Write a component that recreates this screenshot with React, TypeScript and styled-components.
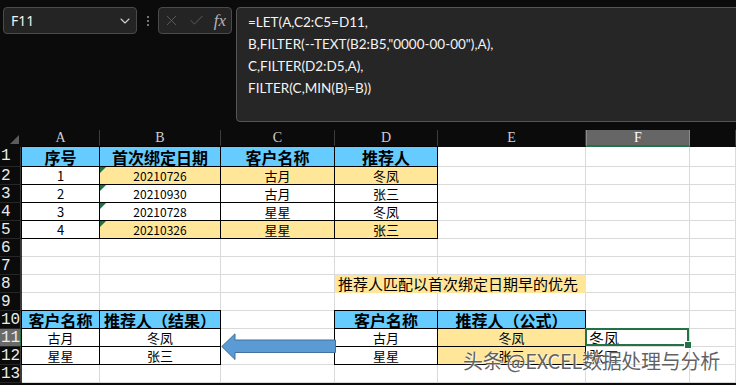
import React from 'react';
import styled, { createGlobalStyle, css } from 'styled-components';
import { ChevronDown, X, Check } from 'lucide-react';

type Fill = 'blue' | 'yellow';

interface CellSpec {
    text?: string;
    fill?: Fill;
    bold?: boolean;
    boxed?: boolean;
    flag?: boolean;
    left?: boolean;
    size?: number;
    span?: number;
    selected?: boolean;
}

const COLS = ['A', 'B', 'C', 'D', 'E', 'F', ''];
const ACTIVE_COL = 'F';
const ACTIVE_ROW = 11;

const head = (text: string): CellSpec => ({ text, fill: 'blue', bold: true, boxed: true, size: 16 });
const box = (text: string, fill?: Fill, flag?: boolean): CellSpec => ({ text, fill, boxed: true, flag, size: flag ? 12 : 13 });

const empty = (n: number): CellSpec[] => Array.from({ length: n }, () => ({}));

const ROWS: CellSpec[][] = [
    [head('序号'), head('首次绑定日期'), head('客户名称'), head('推荐人'), ...empty(3)],
    [box('1'), box('20210726', 'yellow', true), box('古月', 'yellow'), box('冬凤', 'yellow'), ...empty(3)],
    [box('2'), box('20210930', undefined, true), box('古月'), box('张三'), ...empty(3)],
    [box('3'), box('20210728', undefined, true), box('星星'), box('冬凤'), ...empty(3)],
    [box('4'), box('20210326', 'yellow', true), box('星星', 'yellow'), box('张三', 'yellow'), ...empty(3)],
    empty(7),
    empty(7),
    [...empty(3), { text: '推荐人匹配以首次绑定日期早的优先', fill: 'yellow', left: true, size: 15, span: 2 }, ...empty(2)],
    empty(7),
    [head('客户名称'), head('推荐人（结果）'), {}, head('客户名称'), head('推荐人（公式）'), ...empty(2)],
    [box('古月'), box('冬凤'), {}, box('古月'), box('冬凤', 'yellow'), { text: '冬凤', left: true, size: 15, selected: true }, {}],
    [box('星星'), box('张三'), {}, box('星星'), box('张三', 'yellow'), { text: '张三', left: true, size: 15 }, {}],
    empty(7),
];

const FORMULA = [
    '=LET(A,C2:C5=D11,',
    'B,FILTER(--TEXT(B2:B5,"0000-00-00"),A),',
    'C,FILTER(D2:D5,A),',
    'FILTER(C,MIN(B)=B))',
];

export default function App() {
    return (
        <Page>
            <GlobalStyle />
            <Toolbar>
                <NameBox>
                    <span>F11</span>
                    <ChevronDown size={16} strokeWidth={1.6} />
                </NameBox>
                <Kebab>
                    <i /><i /><i />
                </Kebab>
                <FxBox>
                    <X size={17} strokeWidth={1.3} />
                    <Check size={17} strokeWidth={1.3} />
                    <FxMark>fx</FxMark>
                </FxBox>
                <FormulaBox>
                    {FORMULA.map((line) => (
                        <FormulaLine key={line}>{line}</FormulaLine>
                    ))}
                </FormulaBox>
            </Toolbar>

            <Sheet>
                <Corner>
                    <CornerMark />
                </Corner>
                {COLS.map((c, i) => (
                    <ColHead key={i} $active={c === ACTIVE_COL}>{c}</ColHead>
                ))}

                {ROWS.map((row, r) => (
                    <React.Fragment key={r}>
                        <RowHead $active={r + 1 === ACTIVE_ROW}>{r + 1}</RowHead>
                        {row.map((cell, c) => (
                            <Cell
                                key={c}
                                $fill={cell.fill}
                                $bold={cell.bold}
                                $boxed={cell.boxed}
                                $flag={cell.flag}
                                $left={cell.left}
                                $size={cell.size}
                                $span={cell.span}
                                $selected={cell.selected}
                            >
                                {cell.text}
                            </Cell>
                        ))}
                    </React.Fragment>
                ))}

                <Arrow width="116" height="28" viewBox="0 0 116 28">
                    <path
                        d="M0.8 13.5 L14 0.8 L14 7 L114.5 7 L114.5 19.5 L14 19.5 L14 26.5 Z"
                        fill="#5b9bd5"
                        stroke="#41719c"
                        strokeWidth="1"
                    />
                </Arrow>
            </Sheet>

            <Watermark>头条 @EXCEL数据处理与分析</Watermark>
        </Page>
    );
}

const GlobalStyle = createGlobalStyle`
    html, body {
        margin: 0;
        padding: 0;
        background: #0b0b0b;
        overflow: hidden;
    }
    * {
        box-sizing: border-box;
    }
`;

const Page = styled.div`
    position: relative;
    width: 736px;
    height: 385px;
    overflow: hidden;
    background: #0b0b0b;
    font-family: "Noto Sans CJK SC", sans-serif;
`;

const Toolbar = styled.div`
    height: 130px;
    display: flex;
    align-items: flex-start;
    padding: 7px 0 0 3px;
`;

const NameBox = styled.div`
    width: 134px;
    height: 27px;
    display: flex;
    align-items: center;
    justify-content: space-between;
    padding: 0 3px 0 7px;
    background: #242424;
    border: 1px solid #4a4a4a;
    border-radius: 4px;
    color: #f2f2f2;
    font-family: "Noto Sans", sans-serif;
    font-size: 14px;

    svg {
        color: #d0d0d0;
    }
`;

const Kebab = styled.div`
    width: 21px;
    height: 27px;
    display: flex;
    flex-direction: column;
    align-items: center;
    justify-content: center;
    gap: 2px;

    i {
        width: 2px;
        height: 2px;
        border-radius: 50%;
        background: #9a9a9a;
    }
`;

const FxBox = styled.div`
    width: 74px;
    height: 27px;
    display: flex;
    align-items: center;
    justify-content: space-between;
    padding: 0 5px 0 4px;
    background: #242424;
    border: 1px solid #4a4a4a;
    border-radius: 4px;
    color: #5e5e5e;
`;

const FxMark = styled.span`
    color: #b4b4b4;
    font-family: "Liberation Serif", serif;
    font-style: italic;
    font-size: 17px;
    line-height: 1;
`;

const FormulaBox = styled.div`
    flex: 1;
    height: 115px;
    margin-left: 4px;
    margin-right: -10px;
    padding: 3px 10px 0 11px;
    background: #262626;
    border: 1px solid #555;
    border-radius: 4px;
    color: #f4f4f4;
    font-family: "Lato", sans-serif;
    font-size: 13.5px;
`;

const FormulaLine = styled.div`
    line-height: 22px;
    white-space: pre;
`;

const Sheet = styled.div`
    position: relative;
    display: grid;
    grid-template-columns: 22px 78px 121px 114px 103px 148px 104px 1fr;
    grid-template-rows: 17px 20px repeat(12, 18px);
    background: #fff;
`;

const Corner = styled.div`
    background: #0b0b0b;
    display: flex;
    align-items: flex-end;
    justify-content: flex-end;
    padding: 0 3px 3px 0;
`;

const CornerMark = styled.div`
    width: 0;
    height: 0;
    border-left: 9px solid transparent;
    border-bottom: 9px solid #5c5c5c;
`;

const ColHead = styled.div<{ $active?: boolean }>`
    background: ${p => (p.$active ? '#666' : '#0b0b0b')};
    color: ${p => (p.$active ? '#fff' : '#cfcfcf')};
    border-right: 1px solid ${p => (p.$active ? '#8a8a8a' : '#3c3c3c')};
    border-left: ${p => (p.$active ? '1px solid #8a8a8a' : 'none')};
    border-bottom: 2px solid ${p => (p.$active ? '#217346' : '#0b0b0b')};
    font-family: "Liberation Serif", serif;
    font-size: 14px;
    line-height: 16px;
    text-align: center;
`;

const RowHead = styled.div<{ $active?: boolean }>`
    background: ${p => (p.$active ? '#6a6a6a' : '#0b0b0b')};
    color: #ececec;
    border-bottom: 1px solid #262626;
    border-right: 2px solid ${p => (p.$active ? '#217346' : '#3a3a3a')};
    font-family: "Liberation Mono", monospace;
    font-size: 16px;
    line-height: 18px;
    padding-left: 1px;
    overflow: hidden;
`;

const fills: Record<Fill, string> = {
    blue: '#66ccff',
    yellow: '#ffe699',
};

interface CellProps {
    $fill?: Fill;
    $bold?: boolean;
    $boxed?: boolean;
    $flag?: boolean;
    $left?: boolean;
    $size?: number;
    $span?: number;
    $selected?: boolean;
}

const Cell = styled.div<CellProps>`
    position: relative;
    grid-column: span ${p => p.$span ?? 1};
    display: flex;
    align-items: center;
    justify-content: ${p => (p.$left ? 'flex-start' : 'center')};
    padding-left: ${p => (p.$left ? '3px' : '0')};
    background: ${p => (p.$fill ? fills[p.$fill] : '#fff')};
    border-right: 1px solid ${p => (p.$span ? 'transparent' : '#dadada')};
    border-bottom: 1px solid ${p => (p.$span ? fills.yellow : '#dadada')};
    color: #000;
    font-size: ${p => p.$size ?? 13}px;
    font-weight: ${p => (p.$bold ? 700 : 400)};
    white-space: nowrap;
    line-height: 1;

    ${p => p.$boxed && css`
        z-index: 1;
        margin: -1px 0 0 -1px;
        border: 1px solid #000;
    `}

    ${p => p.$flag && css`
        &::before {
            content: '';
            position: absolute;
            top: 0;
            left: 0;
            border-top: 6px solid #1e7145;
            border-right: 6px solid transparent;
        }
    `}

    ${p => p.$selected && css`
        z-index: 2;
        &::after {
            content: '';
            position: absolute;
            top: -1px;
            left: -1px;
            right: 0;
            bottom: 0;
            border: 2px solid #217346;
        }
        &::before {
            content: '';
            position: absolute;
            right: -3px;
            bottom: -3px;
            width: 6px;
            height: 6px;
            background: #217346;
            border: 1px solid #fff;
            z-index: 3;
        }
    `}
`;

const Arrow = styled.svg`
    position: absolute;
    left: 221px;
    top: 203px;
    z-index: 4;
`;

const Watermark = styled.div`
    position: absolute;
    left: 463px;
    top: 349px;
    color: rgba(70, 70, 70, 0.85);
    font-family: "Noto Sans CJK SC", sans-serif;
    font-size: 20px;
    line-height: 24px;
    letter-spacing: -0.3px;
    text-shadow: 0 0 2px rgba(255, 255, 255, 0.9), 1px 1px 1px rgba(255, 255, 255, 0.8);
    z-index: 5;
    pointer-events: none;
`;
